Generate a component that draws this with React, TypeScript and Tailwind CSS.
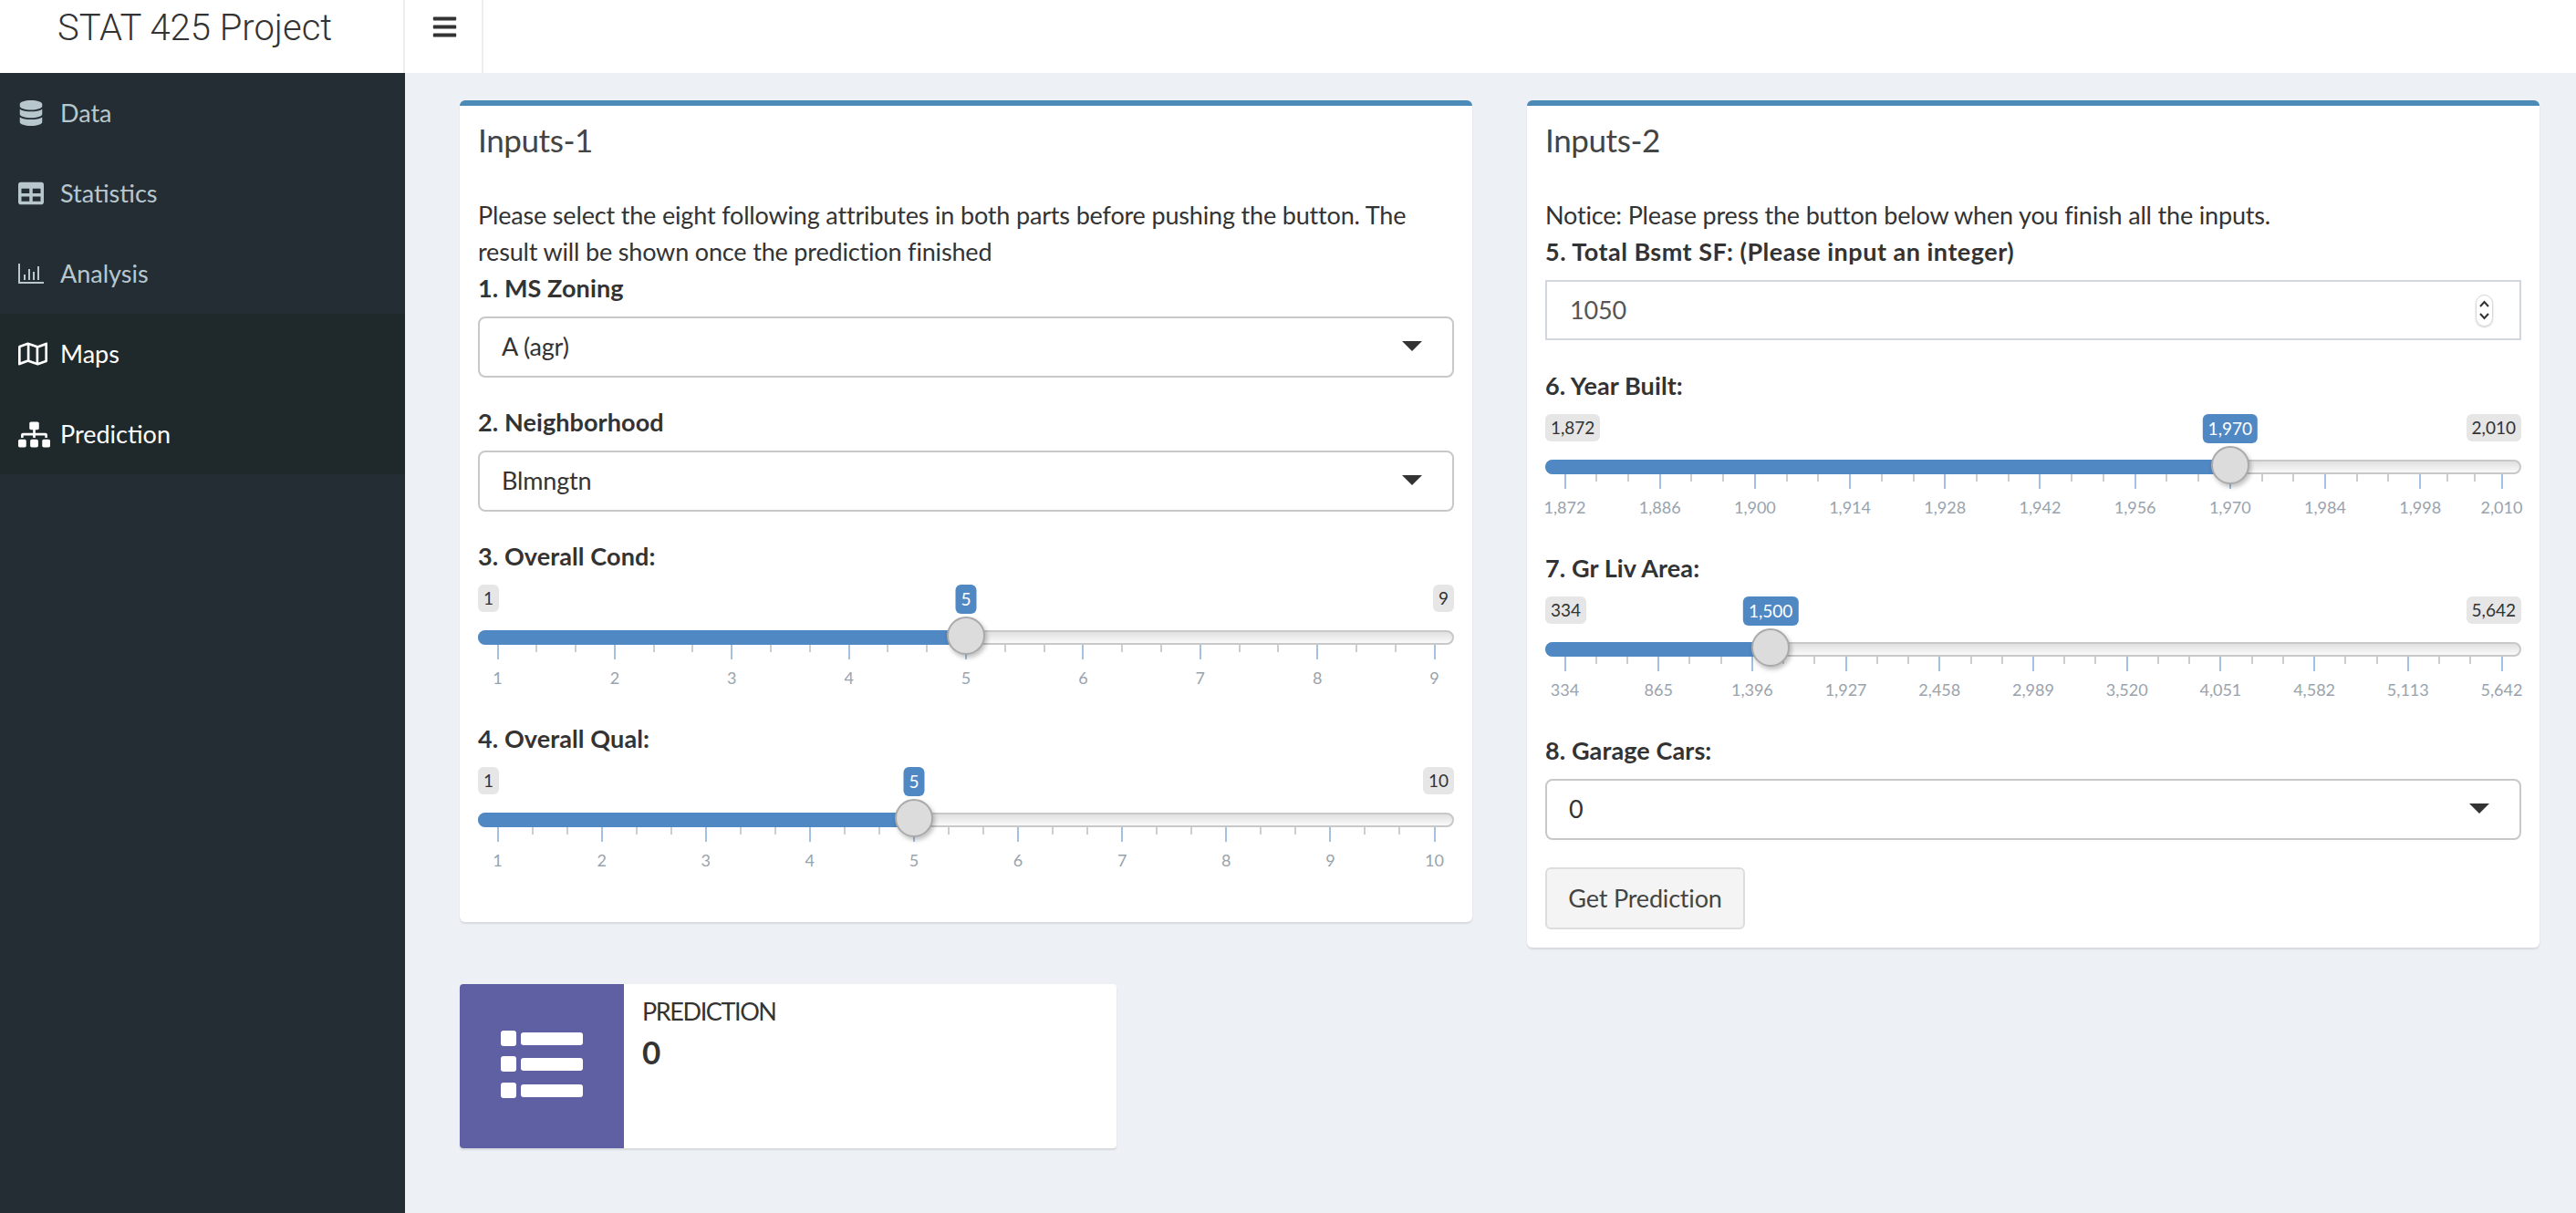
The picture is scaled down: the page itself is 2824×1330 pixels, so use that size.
import React from 'react';
import { FaDatabase, FaTable, FaRegMap, FaSitemap, FaBars } from 'react-icons/fa';

const sans = { fontFamily: 'Lato, sans-serif' };

const BarChartIcon: React.FC = () => (
  <svg width="28" height="22" viewBox="0 0 28 22" fill="currentColor">
    <rect x="0" y="0" width="2" height="22" />
    <rect x="0" y="20" width="28" height="2" />
    <rect x="6" y="12" width="2" height="6" />
    <rect x="11" y="6" width="2" height="12" />
    <rect x="16" y="9" width="2" height="9" />
    <rect x="21" y="3" width="2" height="15" />
  </svg>
);

const ListIcon: React.FC = () => (
  <svg width="90" height="74" viewBox="0 0 90 74" fill="#ffffff" className="mb-[4px]">
    <rect x="0" y="0" width="17" height="17" rx="3" />
    <rect x="22" y="2" width="68" height="14" rx="3" />
    <rect x="0" y="28" width="17" height="17" rx="3" />
    <rect x="22" y="30" width="68" height="14" rx="3" />
    <rect x="0" y="57" width="17" height="17" rx="3" />
    <rect x="22" y="59" width="68" height="14" rx="3" />
  </svg>
);

const menu = [
  { label: 'Data', icon: <FaDatabase size={28} />, active: false },
  { label: 'Statistics', icon: <FaTable size={28} />, active: false },
  { label: 'Analysis', icon: <BarChartIcon />, active: false },
  { label: 'Maps', icon: <FaRegMap size={32} />, active: true },
  { label: 'Prediction', icon: <FaSitemap size={35} />, active: true },
];

const FieldLabel: React.FC<{ children: React.ReactNode; className?: string }> = ({ children, className }) => (
  <div className={`h-[40px] leading-[38px] font-bold text-[#333] text-[27px] ${className ?? 'tracking-[0.1px]'}`}>
    {children}
  </div>
);

const SelectBox: React.FC<{ label: string; value: string }> = ({ label, value }) => (
  <div className="mb-[30px]">
    <FieldLabel>{label}</FieldLabel>
    <div className="mt-[10px] h-[67px] rounded-[8px] border-2 border-[#c8c8c8] bg-white flex items-center justify-between pl-[24px] pr-[33px] text-[27px] text-[#333]">
      <span className="mb-[2px]">{value}</span>
      <span className="w-0 h-0 mb-[3px] border-x-[11px] border-x-transparent border-t-[11px] border-t-[#333]" />
    </div>
  </div>
);

interface SliderProps {
  label: string;
  min: number;
  max: number;
  value: number;
  ticks: number[];
  labels?: number[];
  className?: string;
}

const fmt = (n: number) => n.toLocaleString('en-US');

const Slider: React.FC<SliderProps> = ({ label, min, max, value, ticks, labels, className }) => {
  const pos = (v: number) => ((v - min) / (max - min)) * 1027 + 21.5;
  const handleX = pos(value);
  const minors: number[] = [];
  ticks.slice(0, -1).forEach((t, i) => {
    const a = pos(t);
    const b = pos(ticks[i + 1]);
    minors.push(a + (b - a) / 3, a + ((b - a) * 2) / 3);
  });
  return (
    <div className={className ?? 'mb-[30px]'}>
      <FieldLabel>{label}</FieldLabel>
      <div className="relative mt-[10px] h-[120px] tracking-normal">
        <div className="flex justify-between">
          <span className="h-[30px] px-[6px] rounded-[6px] bg-[#e6e6e6] text-[#333] text-[19px] leading-[30px]">{fmt(min)}</span>
          <span className="h-[30px] px-[6px] rounded-[6px] bg-[#e6e6e6] text-[#333] text-[19px] leading-[30px]">{fmt(max)}</span>
        </div>
        <div className="mt-[20px] h-[16px] rounded-full border-2 border-[#c8c8c8] bg-gradient-to-b from-[#e0e0e0] to-[#fafafa]" />
        <div
          className="absolute left-0 top-[50px] h-[16px] rounded-l-full bg-[#5088c4]"
          style={{ width: handleX }}
        />
        {minors.map((x) => (
          <span key={x} className="absolute top-[66px] w-[2px] h-[8px] bg-[#cdcdcd]" style={{ left: x - 1 }} />
        ))}
        {ticks.map((t, i) => (
          <React.Fragment key={t}>
            <span className="absolute top-[66px] w-[2px] h-[16px] bg-[#a3c2e2]" style={{ left: pos(t) - 1 }} />
            <span
              className="absolute top-[92px] -translate-x-1/2 text-[18px] leading-[20px] text-[#99a3ad]"
              style={{ left: pos(t) }}
            >
              {fmt(labels ? labels[i] : t)}
            </span>
          </React.Fragment>
        ))}
        <span
          className="absolute top-0 -translate-x-1/2 h-[32px] px-[6px] rounded-[6px] bg-[#5088c4] text-white text-[19px] leading-[32px]"
          style={{ left: handleX }}
        >
          {fmt(value)}
        </span>
        <span
          className="absolute top-[35px] -translate-x-1/2 w-[42px] h-[42px] rounded-full bg-[#dcdcdc] border-2 border-[#aaaaaa] shadow-[2px_3px_5px_rgba(0,0,0,0.25)]"
          style={{ left: handleX }}
        />
      </div>
    </div>
  );
};

const Card: React.FC<{ title: string; children: React.ReactNode }> = ({ title, children }) => (
  <div className="w-[1110px] bg-white rounded-[6px] border-t-[6px] border-t-[#4c8ab8] shadow-[0_2px_2px_rgba(0,0,0,0.1)] px-[20px] pb-[20px] pt-[19px]">
    <div className="h-[40px] leading-[36px] text-[35px] tracking-[-0.4px] text-[#444]">{title}</div>
    <div className="mt-[42px] text-[27px] leading-[40px] tracking-[-0.17px] text-[#333]">{children}</div>
  </div>
);

const range = (start: number, step: number, count: number) =>
  Array.from({ length: count }, (_, i) => start + step * i);

export default function App() {
  return (
    <div className="h-[1330px] w-[2824px] overflow-hidden bg-[#edf0f5] flex flex-col" style={sans}>
      <header className="h-[80px] shrink-0 flex bg-white">
        <div className="w-[444px] border-r-2 border-[#eeeeee] pl-[63px] pt-[4px] text-[40px] leading-[54px] font-light text-[#333]" style={{ fontFamily: 'Roboto, sans-serif' }}>
          STAT 425 Project
        </div>
        <div className="w-[86px] border-r-2 border-[#eeeeee] pl-[29px] pt-[15px] text-[#333]">
          <FaBars size={29} />
        </div>
      </header>
      <div className="flex flex-1 min-h-0">
        <aside className="w-[444px] shrink-0 bg-[#242d33]">
          {menu.map((m) => (
            <div
              key={m.label}
              className={`h-[88px] flex items-center pl-[20px] text-[27px] ${m.active ? 'bg-[#1f282b] text-white' : 'text-[#b8c7ce]'}`}
            >
              <span className="w-[46px] flex items-center">{m.icon}</span>
              {m.label}
            </div>
          ))}
        </aside>
        <main className="flex-1 pl-[60px] pt-[30px] flex gap-[60px] items-start">
          <div className="flex flex-col gap-[68px]">
            <Card title="Inputs-1">
              <p className="-mt-[1px] mb-[1px]">
                Please select the eight following attributes in both parts before pushing the button. The
                <br />
                result will be shown once the prediction finished
              </p>
              <SelectBox label="1. MS Zoning" value="A (agr)" />
              <SelectBox label="2. Neighborhood" value="Blmngtn" />
              <Slider label="3. Overall Cond:" min={1} max={9} value={5} ticks={range(1, 1, 9)} />
              <Slider label="4. Overall Qual:" min={1} max={10} value={5} ticks={range(1, 1, 10)} />
            </Card>
            <div className="w-[720px] h-[180px] bg-white rounded-[4px] overflow-hidden flex shadow-[0_2px_2px_rgba(0,0,0,0.1)]">
              <div className="w-[180px] bg-[#5f5fa3] flex items-center justify-center">
                <ListIcon />
              </div>
              <div className="pl-[20px] pt-[10px] text-[#333]">
                <div className="text-[27px] leading-[40px] uppercase tracking-[-1.4px]">Prediction</div>
                <div className="text-[35px] leading-[46px] font-bold mt-[1px]">0</div>
              </div>
            </div>
          </div>
          <Card title="Inputs-2">
            <p className="-mt-[1px] mb-[1px]">Notice: Please press the button below when you finish all the inputs.</p>
            <FieldLabel className="tracking-[0.5px]">5. Total Bsmt SF: (Please input an integer)</FieldLabel>
            <div className="mt-[10px] mb-[31px] h-[66px] border-2 border-[#d2d6de] flex items-center justify-between pl-[25px] pr-[29px] text-[#555]">
              <span>1050</span>
              <span className="w-[19px] h-[35px] rounded-full border border-[#d8d8d8] shadow-[0_1px_2px_rgba(0,0,0,0.2)] flex flex-col items-center justify-center">
                <svg width="11" height="24" viewBox="0 0 11 24" fill="none" stroke="#333" strokeWidth="2">
                  <path d="M1 8 L5.5 3 L10 8" />
                  <path d="M1 16 L5.5 21 L10 16" />
                </svg>
              </span>
            </div>
            <Slider label="6. Year Built:" min={1872} max={2010} value={1970} ticks={[...range(1872, 14, 10), 2010]} />
            <Slider
              label="7. Gr Liv Area:"
              min={334}
              max={5642}
              value={1500}
              ticks={range(334, 530.8, 11)}
              labels={[334, 865, 1396, 1927, 2458, 2989, 3520, 4051, 4582, 5113, 5642]}
            />
            <SelectBox label="8. Garage Cars:" value="0" />
            <button className="h-[68px] w-[219px] rounded-[6px] border-2 border-[#dddddd] bg-[#f4f4f4] text-[27px] text-[#444]">
              Get Prediction
            </button>
          </Card>
        </main>
      </div>
    </div>
  );
}
